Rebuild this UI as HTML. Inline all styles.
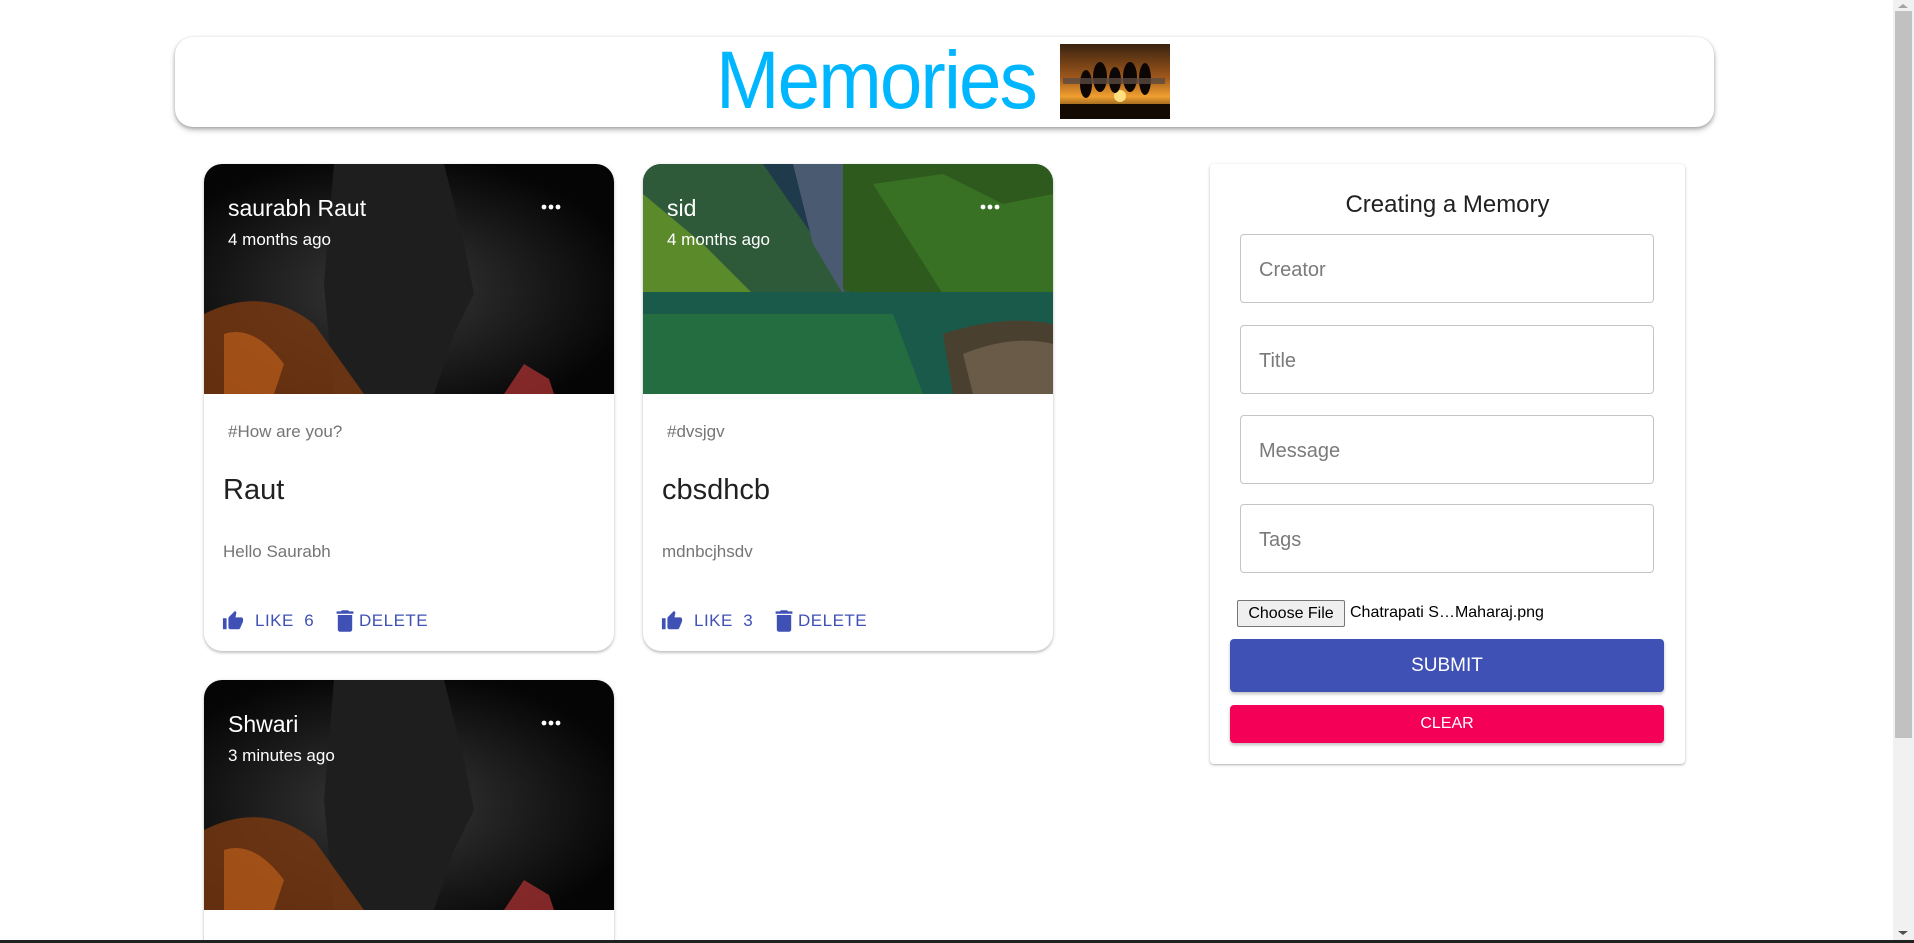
<!DOCTYPE html>
<html style="overflow:hidden;height:943px"><head><meta charset="utf-8"><style>
*{box-sizing:border-box;margin:0;padding:0}
body{width:1914px;height:943px;overflow:hidden;background:#fff;font-family:"Liberation Sans",Arial,sans-serif;position:relative}
.abs{position:absolute}
.header{left:175px;top:37px;width:1539px;height:90px;border-radius:18px;background:#fff;box-shadow:0 3px 6px rgba(0,0,0,.25),0 1px 3px rgba(0,0,0,.2)}
.title{left:716px;top:36px;font-size:82px;color:#00b7ff;letter-spacing:-2px;line-height:90px;transform:scaleX(0.93);transform-origin:left}
.card{width:410px;border-radius:18px;background:#fff;box-shadow:0 2px 2px rgba(0,0,0,.14),0 1px 4px rgba(0,0,0,.15);overflow:hidden}
.img{position:absolute;left:0;top:0;width:410px;height:230px;overflow:hidden}
.name{position:absolute;left:24px;top:31px;color:#fff;font-size:23px}
.time{position:absolute;left:24px;top:66px;color:#fff;font-size:17px}
.dots{position:absolute;left:337px;top:40px}
.tag{position:absolute;left:24px;top:258px;color:#757575;font-size:17px}
.ttl{position:absolute;left:19px;top:310px;color:#212121;font-size:29px}
.msg{position:absolute;left:19px;top:378px;color:#757575;font-size:17px}
.act{position:absolute;top:447px;color:#3f51b5;font-size:17px;letter-spacing:.5px}
.form{left:1210px;top:164px;width:475px;height:600px;background:#fff;border-radius:4px;box-shadow:0 1px 3px rgba(0,0,0,.22),0 1px 1px rgba(0,0,0,.12)}
.inp{position:absolute;left:30px;width:414px;height:69px;border:1px solid #c4c4c4;border-radius:4px;color:#7a7a7a;font-size:20px;padding:24px 0 0 18px}
.btn{position:absolute;left:20px;width:434px;border-radius:4px;color:#fff;text-align:center;box-shadow:0 2px 3px rgba(0,0,0,.25)}
</style></head><body>
<div class="abs header"></div>
<div class="abs title">Memories</div>
<svg class="abs" style="left:1060px;top:44px" width="110" height="75" viewBox="0 0 110 75">
<defs><linearGradient id="sk" x1="0" y1="0" x2="0" y2="1"><stop offset="0" stop-color="#3a2310"/><stop offset=".45" stop-color="#a0581c"/><stop offset=".7" stop-color="#f0a030"/><stop offset="1" stop-color="#1a0c04"/></linearGradient></defs>
<rect width="110" height="75" fill="url(#sk)"/><circle cx="60" cy="52" r="6" fill="#ffe080"/>
<rect y="60" width="110" height="15" fill="#140a04"/>
<g fill="#0c0604"><ellipse cx="26" cy="40" rx="6" ry="14"/><ellipse cx="40" cy="33" rx="7" ry="15"/><ellipse cx="55" cy="36" rx="6" ry="13"/><ellipse cx="70" cy="33" rx="7" ry="15"/><ellipse cx="85" cy="35" rx="6" ry="16"/></g>
<rect x="3" y="34" width="102" height="6" fill="#5a4a40" opacity=".8"/>
</svg>

<!-- card 1 -->
<div class="abs card" style="left:204px;top:164px;height:487px">
<div class="img"><svg width="410" height="230"><defs><radialGradient id="g1" cx=".45" cy=".55" r=".6"><stop offset="0" stop-color="#3a3a3a"/><stop offset="1" stop-color="#050505"/></radialGradient></defs>
<rect width="410" height="230" fill="url(#g1)"/>
<path d="M130 0 L240 0 L260 80 L270 130 L250 170 L230 230 L130 230 L120 120Z" fill="#1e1e1e"/>
<path d="M0 150 Q60 120 110 160 L160 230 L0 230Z" fill="#7a3a12" opacity=".8"/>
<path d="M20 170 Q50 160 80 200 L70 230 L20 230Z" fill="#c8641a" opacity=".6"/>
<path d="M300 230 L320 200 L345 215 L350 230Z" fill="#a03030" opacity=".8"/></svg>
<div class="name">saurabh Raut</div><div class="time">4 months ago</div>
<svg class="dots" width="22" height="6"><circle cx="3" cy="3" r="2.4" fill="#fff"/><circle cx="10" cy="3" r="2.4" fill="#fff"/><circle cx="17" cy="3" r="2.4" fill="#fff"/></svg></div>
<div class="tag">#How are you?</div><div class="ttl">Raut</div><div class="msg">Hello Saurabh</div>
<svg class="abs" style="left:18px;top:446px" width="22" height="22" viewBox="0 0 24 24"><path fill="#3f51b5" d="M1 21h4V9H1v12zm22-11c0-1.1-.9-2-2-2h-6.31l.95-4.57.03-.32c0-.41-.17-.79-.44-1.06L14.17 1 7.59 7.59C7.22 7.950 7 8.45 7 9v10c0 1.1.9 2 2 2h9c.83 0 1.54-.5 1.84-1.22l3.02-7.05c.09-.23.14-.47.14-.73v-2z"/></svg>
<div class="act" style="left:51px">LIKE&nbsp;&nbsp;6</div>
<svg class="abs" style="left:131px;top:445px" width="20" height="24" viewBox="4 2 16 20"><path fill="#3f51b5" d="M6 19c0 1.1.9 2 2 2h8c1.1 0 2-.9 2-2V7H6v12zM19 4h-3.5l-1-1h-5l-1 1H5v2h14V4z"/></svg>
<div class="act" style="left:155px">DELETE</div>
</div>

<!-- card 2 -->
<div class="abs card" style="left:643px;top:164px;height:487px">
<div class="img"><svg width="410" height="230">
<rect width="410" height="230" fill="#1f3a4a"/>
<path d="M0 0 L120 0 L210 130 L0 130Z" fill="#2f5a3a"/>
<path d="M0 30 L60 80 L110 130 L0 130Z" fill="#5a8a2a"/>
<path d="M150 0 L210 0 L220 60 L200 130 L170 80Z" fill="#4a5a70"/>
<path d="M200 0 L410 0 L410 180 L330 170 L250 140 L200 125Z" fill="#2e5a1e"/>
<path d="M230 20 L300 10 L360 40 L410 30 L410 150 L300 130Z" fill="#3f7a26" opacity=".7"/>
<rect y="128" width="410" height="102" fill="#1a5a4a"/>
<path d="M0 150 L250 150 L280 230 L0 230Z" fill="#2a7a3a" opacity=".6"/>
<path d="M300 170 Q360 150 410 160 L410 230 L310 230Z" fill="#4a4030"/>
<path d="M320 190 Q370 170 410 180 L410 230 L330 230Z" fill="#6a5a48"/></svg>
<div class="name">sid</div><div class="time">4 months ago</div>
<svg class="dots" width="22" height="6"><circle cx="3" cy="3" r="2.4" fill="#fff"/><circle cx="10" cy="3" r="2.4" fill="#fff"/><circle cx="17" cy="3" r="2.4" fill="#fff"/></svg></div>
<div class="tag">#dvsjgv</div><div class="ttl">cbsdhcb</div><div class="msg">mdnbcjhsdv</div>
<svg class="abs" style="left:18px;top:446px" width="22" height="22" viewBox="0 0 24 24"><path fill="#3f51b5" d="M1 21h4V9H1v12zm22-11c0-1.1-.9-2-2-2h-6.31l.95-4.57.03-.32c0-.41-.17-.79-.44-1.06L14.17 1 7.59 7.59C7.22 7.95 7 8.45 7 9v10c0 1.1.9 2 2 2h9c.83 0 1.54-.5 1.84-1.22l3.02-7.05c.09-.23.14-.47.14-.73v-2z"/></svg>
<div class="act" style="left:51px">LIKE&nbsp;&nbsp;3</div>
<svg class="abs" style="left:131px;top:445px" width="20" height="24" viewBox="4 2 16 20"><path fill="#3f51b5" d="M6 19c0 1.1.9 2 2 2h8c1.1 0 2-.9 2-2V7H6v12zM19 4h-3.5l-1-1h-5l-1 1H5v2h14V4z"/></svg>
<div class="act" style="left:155px">DELETE</div>
</div>

<!-- card 3 -->
<div class="abs card" style="left:204px;top:680px;height:263px;border-bottom-left-radius:0;border-bottom-right-radius:0">
<div class="img"><svg width="410" height="230"><defs><radialGradient id="g3" cx=".45" cy=".55" r=".6"><stop offset="0" stop-color="#3a3a3a"/><stop offset="1" stop-color="#050505"/></radialGradient></defs>
<rect width="410" height="230" fill="url(#g3)"/>
<path d="M130 0 L240 0 L260 80 L270 130 L250 170 L230 230 L130 230 L120 120Z" fill="#1e1e1e"/>
<path d="M0 150 Q60 120 110 160 L160 230 L0 230Z" fill="#7a3a12" opacity=".8"/>
<path d="M20 170 Q50 160 80 200 L70 230 L20 230Z" fill="#c8641a" opacity=".6"/>
<path d="M300 230 L320 200 L345 215 L350 230Z" fill="#a03030" opacity=".8"/></svg>
<div class="name">Shwari</div><div class="time">3 minutes ago</div>
<svg class="dots" width="22" height="6"><circle cx="3" cy="3" r="2.4" fill="#fff"/><circle cx="10" cy="3" r="2.4" fill="#fff"/><circle cx="17" cy="3" r="2.4" fill="#fff"/></svg></div>
</div>

<!-- form -->
<div class="abs form">
<div class="abs" style="left:0;width:475px;top:27px;text-align:center;font-size:24px;color:#212121">Creating a Memory</div>
<div class="inp" style="top:70px">Creator</div>
<div class="inp" style="top:161px">Title</div>
<div class="inp" style="top:251px">Message</div>
<div class="inp" style="top:340px">Tags</div>
<div class="abs" style="left:27px;top:436px;width:108px;height:27px;border:1px solid #767676;border-radius:2px;background:#efefef;font-size:16px;line-height:25px;text-align:center;color:#000">Choose File</div>
<div class="abs" style="left:140px;top:440px;font-size:16px;color:#000">Chatrapati S…Maharaj.png</div>
<div class="btn" style="top:475px;height:53px;background:#3f51b5;font-size:19px;line-height:53px">SUBMIT</div>
<div class="btn" style="top:541px;height:38px;background:#f50057;font-size:16px;line-height:38px">CLEAR</div>
</div>

<!-- scrollbar -->
<div class="abs" style="left:1893px;top:0;width:21px;height:943px;background:#f1f1f1"></div>
<div class="abs" style="left:1895px;top:11px;width:17px;height:727px;background:#c1c1c1"></div>
<div class="abs" style="left:1898px;top:4px;width:0;height:0;border-left:5px solid transparent;border-right:5px solid transparent;border-bottom:4px solid #a3a3a3"></div>
<div class="abs" style="left:1898px;top:931px;width:0;height:0;border-left:5px solid transparent;border-right:5px solid transparent;border-top:4px solid #505050"></div>
<div class="abs" style="left:0;top:940px;width:1914px;height:3px;background:#222"></div>
</body></html>
